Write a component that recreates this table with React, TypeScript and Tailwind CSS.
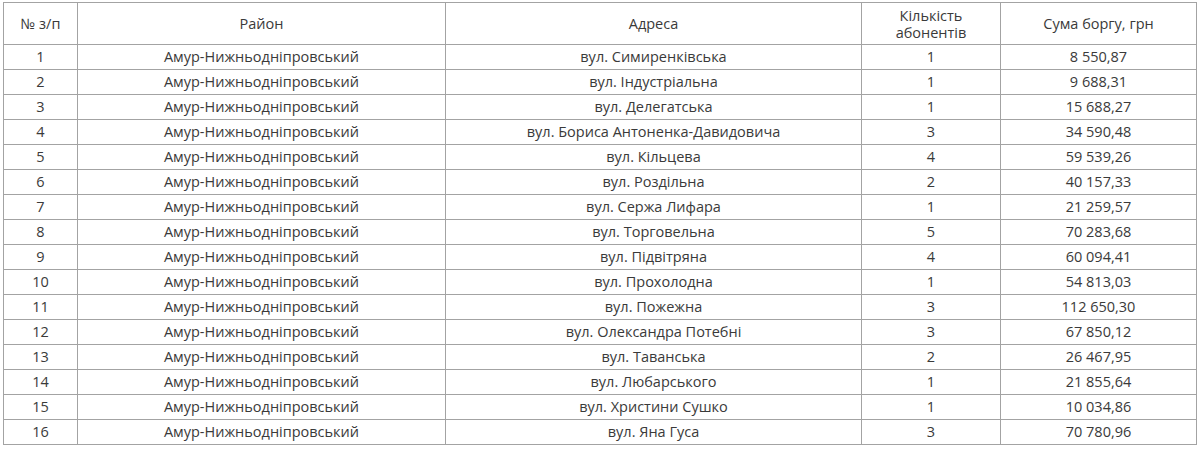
const rows: [string, string, number, string][] = [
  ["Амур-Нижньодніпровський", "вул. Симиренківська", 1, "8 550,87"],
  ["Амур-Нижньодніпровський", "вул. Індустріальна", 1, "9 688,31"],
  ["Амур-Нижньодніпровський", "вул. Делегатська", 1, "15 688,27"],
  ["Амур-Нижньодніпровський", "вул. Бориса Антоненка-Давидовича", 3, "34 590,48"],
  ["Амур-Нижньодніпровський", "вул. Кільцева", 4, "59 539,26"],
  ["Амур-Нижньодніпровський", "вул. Роздільна", 2, "40 157,33"],
  ["Амур-Нижньодніпровський", "вул. Сержа Лифара", 1, "21 259,57"],
  ["Амур-Нижньодніпровський", "вул. Торговельна", 5, "70 283,68"],
  ["Амур-Нижньодніпровський", "вул. Підвітряна", 4, "60 094,41"],
  ["Амур-Нижньодніпровський", "вул. Прохолодна", 1, "54 813,03"],
  ["Амур-Нижньодніпровський", "вул. Пожежна", 3, "112 650,30"],
  ["Амур-Нижньодніпровський", "вул. Олександра Потебні", 3, "67 850,12"],
  ["Амур-Нижньодніпровський", "вул. Таванська", 2, "26 467,95"],
  ["Амур-Нижньодніпровський", "вул. Любарського", 1, "21 855,64"],
  ["Амур-Нижньодніпровський", "вул. Христини Сушко", 1, "10 034,86"],
  ["Амур-Нижньодніпровський", "вул. Яна Гуса", 3, "70 780,96"],
];

const cell = "border border-[#a3a3a3] text-center align-middle p-0";

export default function App() {
  return (
    <div className="w-[1200px] h-[450px] bg-white pt-[2px] pl-[3px] text-[14.5px] text-[#3a3a3a] font-['Open_Sans',sans-serif]">
      <table className="border-collapse table-fixed w-[1193px]">
        <colgroup>
          <col className="w-[74px]" />
          <col className="w-[368px]" />
          <col className="w-[416px]" />
          <col className="w-[139px]" />
          <col className="w-[196px]" />
        </colgroup>
        <thead>
          <tr className="h-[42px]">
            <th className={`${cell} font-normal`}>№ з/п</th>
            <th className={`${cell} font-normal`}>Район</th>
            <th className={`${cell} font-normal`}>Адреса</th>
            <th className={`${cell} font-normal leading-[17px]`}>
              Кількість
              <br />
              абонентів
            </th>
            <th className={`${cell} font-normal`}>Сума боргу, грн</th>
          </tr>
        </thead>
        <tbody>
          {rows.map(([district, address, count, sum], i) => (
            <tr key={i} className="h-[25px]">
              <td className={cell}>{i + 1}</td>
              <td className={cell}>{district}</td>
              <td className={cell}>{address}</td>
              <td className={cell}>{count}</td>
              <td className={cell}>{sum}</td>
            </tr>
          ))}
        </tbody>
      </table>
    </div>
  );
}
